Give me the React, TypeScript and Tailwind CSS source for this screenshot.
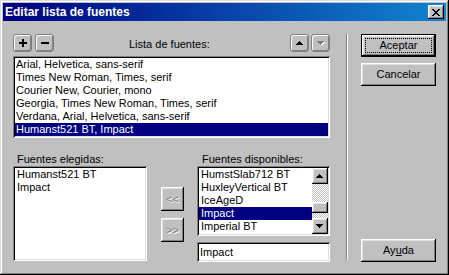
import React from 'react';

const raised =
  'shadow-[inset_-1px_-1px_#000,inset_1px_1px_#fff,inset_-2px_-2px_#808080,inset_2px_2px_#dfdfdf]';
const sunken =
  'shadow-[inset_1px_1px_#808080,inset_-1px_-1px_#fff,inset_2px_2px_#000,inset_-2px_-2px_#dfdfdf]';

const fontList = [
  'Arial, Helvetica, sans-serif',
  'Times New Roman, Times, serif',
  'Courier New, Courier, mono',
  'Georgia, Times New Roman, Times, serif',
  'Verdana, Arial, Helvetica, sans-serif',
  'Humanst521 BT, Impact',
];

const available = ['HumstSlab712 BT', 'HuxleyVertical BT', 'IceAgeD', 'Impact', 'Imperial BT'];

const ImgButton: React.FC<{ children: React.ReactNode }> = ({ children }) => (
  <div className="w-[19px] h-[18px] rounded-[3px] border border-[#808080] bg-[#c0c0c0] shadow-[inset_1px_1px_#fff,inset_-1px_-1px_#808080] flex items-center justify-center">
    {children}
  </div>
);

const Arrow: React.FC<{ up?: boolean; disabled?: boolean }> = ({ up, disabled }) => {
  const d = up
    ? 'M3 0h1v1h-1zM2 1h3v1h-3zM1 2h5v1h-5zM0 3h7v1h-7z'
    : 'M0 0h7v1h-7zM1 1h5v1h-5zM2 2h3v1h-3zM3 3h1v1h-1z';
  return (
    <svg width="8" height="5" viewBox="0 0 8 5" shapeRendering="crispEdges">
      {disabled && <path d={d} fill="#fff" transform="translate(1 1)" />}
      <path d={d} fill={disabled ? '#808080' : '#000'} />
    </svg>
  );
};

const Button: React.FC<{ children: React.ReactNode; def?: boolean }> = ({ children, def }) =>
  def ? (
    <div className="w-[75px] h-[23px] border border-black flex">
      <div className={`flex-1 flex p-[3px] bg-[#c0c0c0] ${raised}`}>
        <div className="flex-1 border border-dotted border-black flex items-center justify-center">
          {children}
        </div>
      </div>
    </div>
  ) : (
    <div className={`w-[75px] h-[23px] bg-[#c0c0c0] flex items-center justify-center ${raised}`}>
      {children}
    </div>
  );

export default function App() {
  return (
    <div className="w-[449px] h-[275px] bg-[#c0c0c0] p-[3px] flex flex-col text-[11px] leading-[13px] text-black font-['Liberation_Sans',Arial,sans-serif] shadow-[inset_-1px_-1px_#000,inset_1px_1px_#dfdfdf,inset_-2px_-2px_#808080,inset_2px_2px_#fff]">
      {/* Title bar */}
      <div className="h-[18px] flex items-center bg-[linear-gradient(90deg,#000080,#1084d0)] pl-[2px] pr-[2px]">
        <span className="flex-1 text-white font-bold text-[12px] leading-[18px]">Editar lista de fuentes</span>
        <div className={`w-[16px] h-[14px] bg-[#c0c0c0] flex items-center justify-center ${raised}`}>
          <svg width="8" height="7" viewBox="0 0 8 7" shapeRendering="crispEdges">
            <path
              fill="#000"
              d="M0 0h2v1h-2zM6 0h2v1h-2zM1 1h2v1h-2zM5 1h2v1h-2zM2 2h4v1h-4zM3 3h2v1h-2zM2 4h4v1h-4zM1 5h2v1h-2zM5 5h2v1h-2zM0 6h2v1h-2zM6 6h2v1h-2z"
            />
          </svg>
        </div>
      </div>

      <div className="flex mt-[13px] ml-[10px]">
        {/* Left column */}
        <div className="w-[317px] flex flex-col">
          <div className="h-[18px] flex items-end">
            <div className="flex gap-[3px]">
              <ImgButton>
                <svg width="8" height="8" viewBox="0 0 8 8" shapeRendering="crispEdges">
                  <path fill="#000" d="M3 0h2v8h-2zM0 3h8v2h-8z" />
                </svg>
              </ImgButton>
              <ImgButton>
                <svg width="8" height="8" viewBox="0 0 8 8" shapeRendering="crispEdges">
                  <path fill="#000" d="M0 3h8v2h-8z" />
                </svg>
              </ImgButton>
            </div>
            <span className="ml-[75px] flex-1 pb-[1px]">Lista de fuentes:</span>
            <div className="flex gap-[2px]">
              <ImgButton>
                <Arrow up />
              </ImgButton>
              <ImgButton>
                <Arrow disabled />
              </ImgButton>
            </div>
          </div>

          <div className={`mt-[4px] h-[82px] bg-white p-[2px] ${sunken}`}>
            {fontList.map((f, i) => (
              <div
                key={f}
                className={`h-[13px] pl-[1px] whitespace-nowrap ${i === fontList.length - 1 ? 'bg-[#000080] text-white' : ''}`}
              >
                {f}
              </div>
            ))}
          </div>

          <div className="flex mt-[15px]">
            <div className="w-[134px] flex flex-col">
              <span className="pl-[4px]">Fuentes elegidas:</span>
              <div className={`h-[95px] bg-white p-[2px] ${sunken}`}>
                <div className="pl-[2px]">Humanst521 BT</div>
                <div className="pl-[2px]">Impact</div>
              </div>
            </div>

            <div className="ml-[14px] mt-[34px] flex flex-col gap-[7px]">
              <div className={`w-[23px] h-[24px] flex items-center justify-center text-[#808080] [text-shadow:1px_1px_#fff] ${raised}`}>
                &lt;&lt;
              </div>
              <div className={`w-[23px] h-[24px] flex items-center justify-center text-[#808080] [text-shadow:1px_1px_#fff] ${raised}`}>
                &gt;&gt;
              </div>
            </div>

            <div className="ml-[13px] w-[133px] flex flex-col">
              <span className="pl-[5px]">Fuentes disponibles:</span>
              <div className={`h-[70px] bg-white p-[2px] flex ${sunken}`}>
                <div className="flex-1 overflow-hidden">
                  {available.map((f) => (
                    <div
                      key={f}
                      className={`h-[13px] pl-[2px] whitespace-nowrap ${f === 'Impact' ? 'bg-[#000080] text-white' : ''}`}
                    >
                      {f}
                    </div>
                  ))}
                </div>
                <div className="w-[16px] flex flex-col">
                  <div className={`h-[16px] bg-[#c0c0c0] flex items-center justify-center ${raised}`}>
                    <Arrow up />
                  </div>
                  <div className="h-[18px] bg-[repeating-conic-gradient(#c0c0c0_0%_25%,#ffffff_0%_50%)] bg-size-[2px_2px]" />
                  <div className={`h-[11px] bg-[#c0c0c0] ${raised}`} />
                  <div className="flex-1 bg-[repeating-conic-gradient(#c0c0c0_0%_25%,#ffffff_0%_50%)] bg-size-[2px_2px]" />
                  <div className={`h-[16px] bg-[#c0c0c0] flex items-center justify-center ${raised}`}>
                    <Arrow />
                  </div>
                </div>
              </div>
              <div className={`mt-[6px] h-[20px] bg-white px-[3px] flex items-center ${sunken}`}>Impact</div>
            </div>
          </div>
        </div>

        {/* Separator */}
        <div className="ml-[16px] w-[2px] h-[226px] border-l border-[#808080] border-r border-r-white" />

        {/* Right column */}
        <div className="ml-[13px] flex flex-col">
          <Button def>Aceptar</Button>
          <div className="mt-[6px]">
            <Button>Cancelar</Button>
          </div>
          <div className="mt-[153px]">
            <Button>
              <span>
                Ay<span className="underline">u</span>da
              </span>
            </Button>
          </div>
        </div>
      </div>
    </div>
  );
}
